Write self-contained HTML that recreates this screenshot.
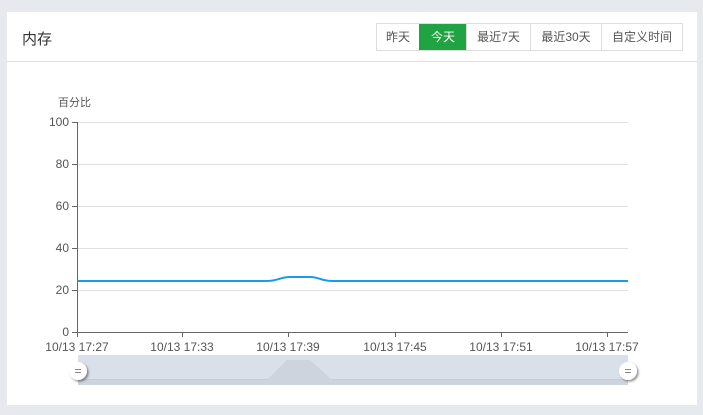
<!DOCTYPE html>
<html><head><meta charset="utf-8"><style>
body{margin:0;width:703px;height:415px;background:#e6e9ee;font-family:"Liberation Sans","Noto Sans CJK SC",sans-serif;position:relative;overflow:hidden}
.card{position:absolute;left:7px;top:12px;width:690px;height:393px;background:#fff}
.title{position:absolute;left:15px;top:16px;font-size:15px;color:#333}
.hr{position:absolute;left:0;top:49px;width:690px;height:1px;background:#ddd}
.btns{position:absolute;left:369px;top:11px;display:flex;border:1px solid #ddd;height:26px}
.btns div{font-size:12px;color:#555;line-height:26px;text-align:center;border-left:1px solid #ddd}
.btns div:first-child{border-left:none}
.btns .on{background:#1fa343;color:#fff;border-left-color:#1fa343}
</style></head><body>
<div class="card">
<div class="title">内存</div>
<div class="btns">
<div style="width:42px">昨天</div><div class="on" style="width:46px">今天</div><div style="width:63px">最近7天</div><div style="width:70px">最近30天</div><div style="width:80px">自定义时间</div>
</div>
<div class="hr"></div>
</div>
<svg width="703" height="415" style="position:absolute;left:0;top:0" font-family="Liberation Sans,Noto Sans CJK SC,sans-serif">
<defs><filter id="sh" x="-50%" y="-50%" width="200%" height="200%"><feDropShadow dx="1.5" dy="1.5" stdDeviation="1" flood-color="#000" flood-opacity="0.45"/></filter></defs>
<text x="58" y="106" font-size="11" fill="#555">百分比</text>
<g stroke="#e0e0e0" stroke-width="1">
<line x1="77" y1="122.5" x2="628" y2="122.5"/><line x1="77" y1="164.5" x2="628" y2="164.5"/><line x1="77" y1="206.5" x2="628" y2="206.5"/><line x1="77" y1="248.5" x2="628" y2="248.5"/><line x1="77" y1="290.5" x2="628" y2="290.5"/>
</g>
<g stroke="#666" stroke-width="1">
<line x1="77.5" y1="122" x2="77.5" y2="332"/><line x1="77" y1="332.5" x2="628" y2="332.5"/>
<line x1="72" y1="122.5" x2="77" y2="122.5"/><line x1="72" y1="164.5" x2="77" y2="164.5"/><line x1="72" y1="206.5" x2="77" y2="206.5"/><line x1="72" y1="248.5" x2="77" y2="248.5"/><line x1="72" y1="290.5" x2="77" y2="290.5"/><line x1="72" y1="332.5" x2="77" y2="332.5"/>
<line x1="77.5" y1="332" x2="77.5" y2="337"/><line x1="182.5" y1="332" x2="182.5" y2="337"/><line x1="288.5" y1="332" x2="288.5" y2="337"/><line x1="395.5" y1="332" x2="395.5" y2="337"/><line x1="501.5" y1="332" x2="501.5" y2="337"/><line x1="607.5" y1="332" x2="607.5" y2="337"/>
</g>
<g font-size="12" fill="#555" text-anchor="end">
<text x="69" y="126">100</text><text x="69" y="168">80</text><text x="69" y="210">60</text><text x="69" y="252">40</text><text x="69" y="294">20</text><text x="69" y="336">0</text>
</g>
<g font-size="12" fill="#555" text-anchor="middle">
<text x="77" y="351">10/13 17:27</text><text x="182" y="351">10/13 17:33</text><text x="288" y="351">10/13 17:39</text><text x="395" y="351">10/13 17:45</text><text x="501" y="351">10/13 17:51</text><text x="607" y="351">10/13 17:57</text>
</g>
<path d="M77 281 L267 281 C278 281 280 277 290 277 L310 277 C320 277 320 281 332 281 L628 281" fill="none" stroke="#1a9be6" stroke-width="2"/>
<rect x="78" y="355" width="550" height="30" fill="#dae0e9"/>
<path d="M78 379 L268 379 L287 360 L310 360 L331 379 L628 379 L628 385 L78 385 Z" fill="#cdd4de"/>
<line x1="78" y1="379.5" x2="268" y2="379.5" stroke="#c5ccd6"/><line x1="331" y1="379.5" x2="628" y2="379.5" stroke="#c5ccd6"/>
<g>
<circle cx="78" cy="371" r="9" fill="#fff" filter="url(#sh)"/>
<line x1="75" y1="369.5" x2="81" y2="369.5" stroke="#888"/><line x1="75" y1="372.5" x2="81" y2="372.5" stroke="#888"/>
<circle cx="628" cy="371" r="9" fill="#fff" filter="url(#sh)"/>
<line x1="625" y1="369.5" x2="631" y2="369.5" stroke="#888"/><line x1="625" y1="372.5" x2="631" y2="372.5" stroke="#888"/>
</g>
</svg>
</body></html>
